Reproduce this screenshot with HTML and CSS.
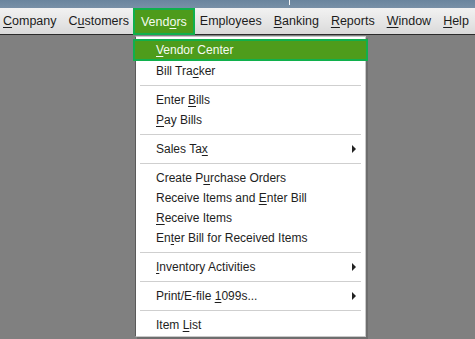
FILE: index.html
```html
<!DOCTYPE html>
<html>
<head>
<meta charset="utf-8">
<link rel="stylesheet" href="styles.css">
</head>
<body>
<div class="titlebar"><span class="tick"></span></div>
<div class="menubar">
  <div class="mi first"><u>C</u>ompany</div>
  <div class="mi">C<u>u</u>stomers</div>
  <div class="mi active">Vend<u>o</u>rs</div>
  <div class="mi">Employees</div>
  <div class="mi"><u>B</u>anking</div>
  <div class="mi"><u>R</u>eports</div>
  <div class="mi"><u>W</u>indow</div>
  <div class="mi"><u>H</u>elp</div>
</div>
<div class="workspace"></div>
<div class="dropdown">
  <div class="item hl"><u>V</u>endor Center</div>
  <div class="item">Bill Tra<u>c</u>ker</div>
  <div class="sep"></div>
  <div class="item">Enter <u>B</u>ills</div>
  <div class="item"><u>P</u>ay Bills</div>
  <div class="sep"></div>
  <div class="item sub">Sales Ta<u>x</u></div>
  <div class="sep"></div>
  <div class="item">Create P<u>u</u>rchase Orders</div>
  <div class="item">Receive Items and <u>E</u>nter Bill</div>
  <div class="item"><u>R</u>eceive Items</div>
  <div class="item">En<u>t</u>er Bill for Received Items</div>
  <div class="sep"></div>
  <div class="item sub"><u>I</u>nventory Activities</div>
  <div class="sep"></div>
  <div class="item sub">Print/E-file <u>1</u>099s...</div>
  <div class="sep"></div>
  <div class="item">Item <u>L</u>ist</div>
</div>
</body>
</html>
```
FILE: styles.css
```css
html, body {
  margin: 0;
  padding: 0;
}
body {
  width: 475px;
  height: 339px;
  overflow: hidden;
  background: #808080;
  font-family: "Liberation Sans", Arial, sans-serif;
  position: relative;
}
u {
  text-decoration: underline;
  text-underline-offset: 2px;
  text-decoration-thickness: 1px;
}
.titlebar {
  height: 8px;
  background: linear-gradient(#6a859e, #7890a7);
}
.tick {
  display: block;
  margin-left: 289px;
  width: 1px;
  height: 5px;
  background: #f4f6f8;
}
.menubar {
  height: 26px;
  display: flex;
  align-items: stretch;
  background: linear-gradient(#f2f2f2, #e4e4e4 60%, #d9d9d9);
  border-bottom: 1px solid #2a2a2a;
  font-size: 12.5px;
  color: #1c1c1c;
}
.mi {
  display: flex;
  align-items: center;
  padding: 0 6px;
  white-space: nowrap;
}
.mi.first {
  padding-left: 3px;
}
.mi.active {
  background: #4d9b1b;
  color: #f4fbef;
  border: 2px solid #10b04c;
  padding: 0 6px;
  height: 23px;
  margin-left: -2px;
  margin-right: -1px;
  position: relative;
  z-index: 2;
}
.workspace {
  height: 300px;
}
.dropdown {
  position: absolute;
  left: 135px;
  top: 36px;
  width: 229px;
  padding: 2px 0 1px 0;
  background: #fff;
  border: 1px solid #c9c9c9;
  border-left-color: #5a5a5a;
  box-shadow: 2px 2px 0 #6e6e6e;
  font-size: 12px;
  color: #1e1e1e;
  z-index: 3;
}
.item {
  height: 20px;
  line-height: 20px;
  padding-left: 20px;
  position: relative;
  white-space: nowrap;
}
.item.hl {
  height: 18px;
  line-height: 18px;
  margin-left: -3px;
  margin-right: -3px;
  padding-left: 21px;
  background: #4e9c1b;
  border: 2px solid #10b04c;
  color: #f6fbf2;
}
.item.sub::after {
  content: "";
  position: absolute;
  right: 9px;
  top: 6px;
  border-left: 4px solid #222;
  border-top: 4px solid transparent;
  border-bottom: 4px solid transparent;
}
.sep {
  height: 1px;
  margin: 4px 4px 4px 4px;
  background: #cfcfcf;
}
```
